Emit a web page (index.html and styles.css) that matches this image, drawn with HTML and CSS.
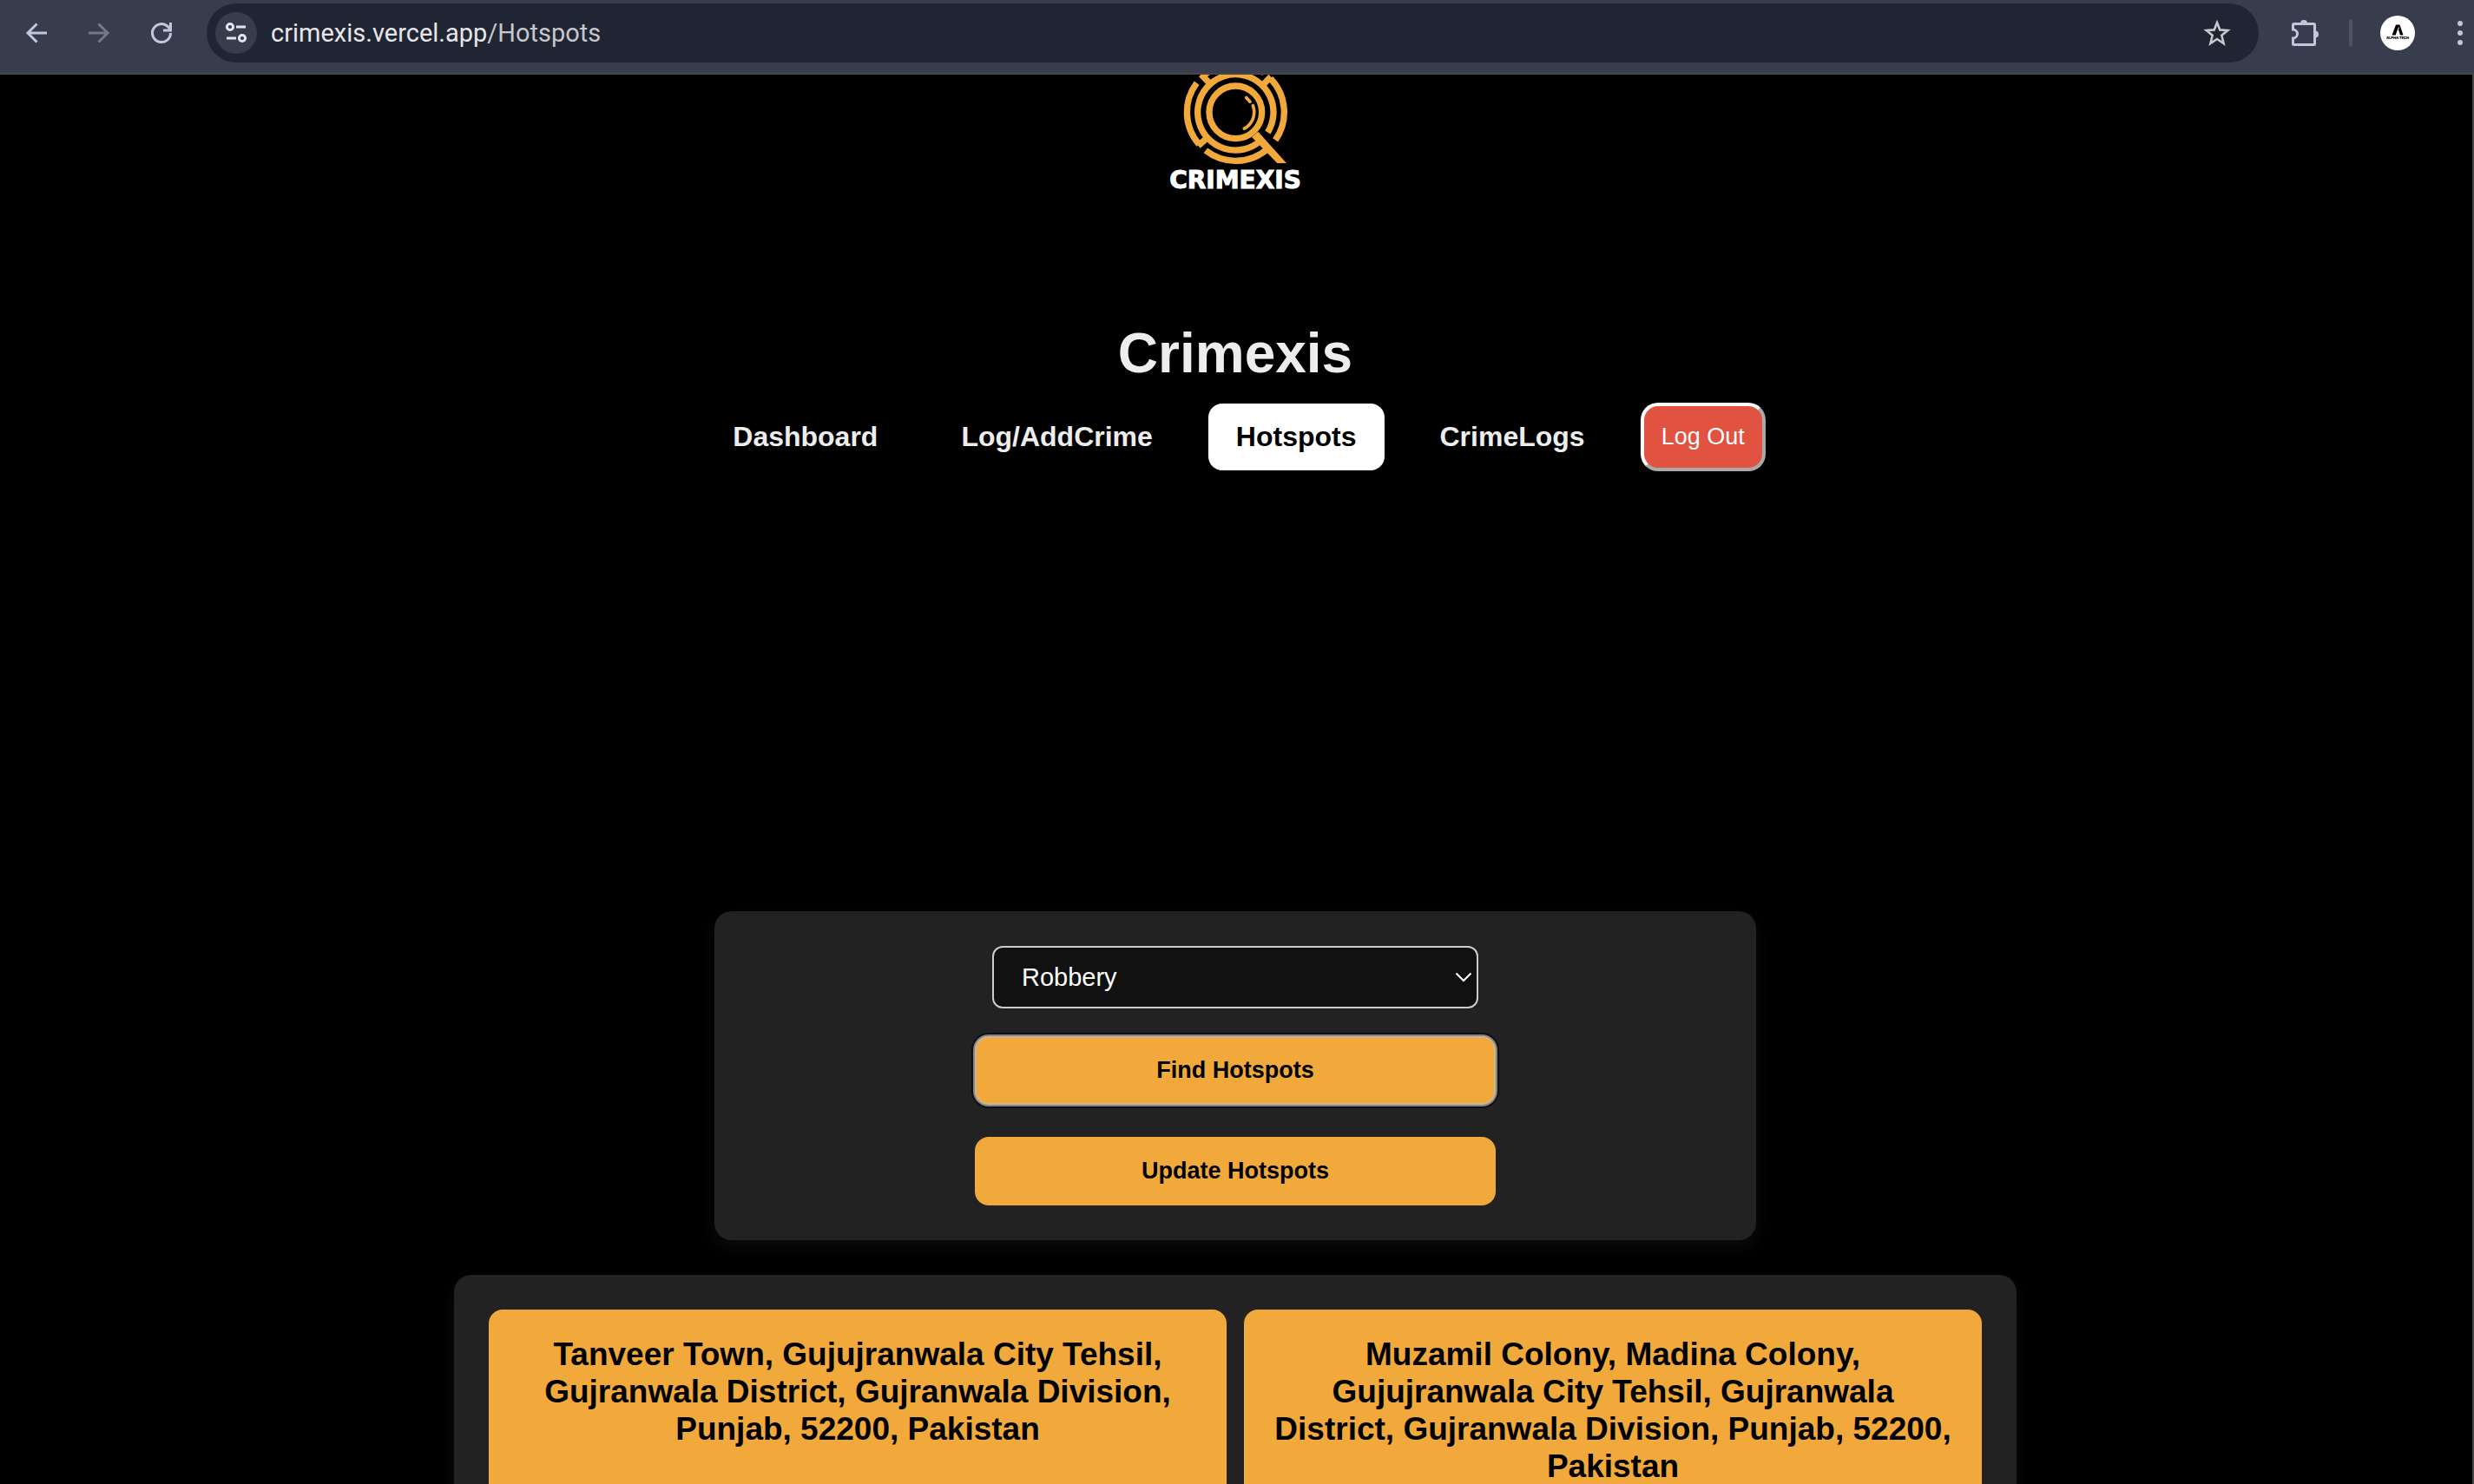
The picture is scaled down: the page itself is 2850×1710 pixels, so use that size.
FILE: index.html
```html
<!DOCTYPE html>
<html lang="en">
<head>
<meta charset="utf-8">
<title>Crimexis</title>
<link rel="stylesheet" href="styles.css">
</head>
<body>
<div class="toolbar">
  <button class="tool" type="button" aria-label="Back">
    <svg width="32" height="32" viewBox="0 0 32 32" fill="none" stroke="#c0c7dc" stroke-width="3"><path d="M28 16H6M16.500 5.500L6 16l10.500 10.500"/></svg>
  </button>
  <button class="tool" type="button" aria-label="Forward">
    <svg width="32" height="32" viewBox="0 0 32 32" fill="none" stroke="#747988" stroke-width="3"><path d="M4 16h22M15.500 5.500L26 16 15.500 26.500"/></svg>
  </button>
  <button class="tool reload" type="button" aria-label="Reload">
    <svg width="32" height="32" viewBox="0 0 32 32" fill="none" stroke="#c0c7dc" stroke-width="3"><path d="M26.500 16A10.500 10.500 0 1 1 23.400 8.600L26 11.200M26.500 4v9H18"/></svg>
  </button>
  <div class="address">
    <button class="site-info" type="button" aria-label="Site information">
      <svg width="28" height="28" viewBox="0 0 28 28" fill="none" stroke="#e3e5ec" stroke-width="3"><circle cx="7" cy="7" r="3.600"/><path d="M14 7h11M3 20h11"/><circle cx="21" cy="20" r="3.600"/></svg>
    </button>
    <a class="url" href="#">crimexis.vercel.app<span class="path">/Hotspots</span></a>
    <button class="tool star" type="button" aria-label="Bookmark">
      <svg width="32" height="32" viewBox="0 0 32 32" fill="none" stroke="#c7c7cc" stroke-width="2.600"><path d="M16 4l3.300 8.400 9 .6-7 5.800 2.300 9.200L16 23l-7.600 5 2.300-9.200-7-5.800 9-.6z"/></svg>
    </button>
  </div>
  <button class="tool puzzle" type="button" aria-label="Extensions">
    <svg width="34" height="34" viewBox="0 0 34 34"><path d="M4.500 6.500h23a1 1 0 0 1 1 1v22a1 1 0 0 1-1 1h-23a1 1 0 0 1-1-1v-6.500a5 5 0 0 0 0-10v-5.500a1 1 0 0 1 1-1z" fill="none" stroke="#c0c7dc" stroke-width="3"/><path d="M12 6a4 4 0 0 1 8 0zM29 14.500a4 4 0 0 1 0 8z" fill="#c0c7dc"/></svg>
  </button>
  <span class="divider"></span>
  <button class="avatar" type="button" aria-label="Profile">
    <svg width="40" height="40" viewBox="0 0 40 40"><circle cx="20" cy="20" r="20" fill="#fff"/><path d="M13.500 22.500L18 10.500h4.500l4 12H23l-2.500-7.500-2.800 7.500z"/><path d="M18.300 22.500l3.200-9" stroke="#fff"/><text class="avatar-text" x="20" y="27" text-anchor="middle">ALPHA TECH</text></svg>
  </button>
  <button class="tool" type="button" aria-label="Menu">
    <svg width="32" height="32" viewBox="0 0 32 32" fill="#c0c7dc"><circle cx="16" cy="5" r="3"/><circle cx="16" cy="16" r="3"/><circle cx="16" cy="27" r="3"/></svg>
  </button>
</div>
<main class="page">
  <header class="brand">
    <svg class="logo" viewBox="0 48 630 312" fill="none" stroke="#f1a93b" stroke-width="22">
      <circle cx="310" cy="178" r="91"/>
      <path d="M421.100 247.400A131 131 0 1 0 394.200 278.400"/>
      <path d="M184 289A168 168 0 0 1 175.800 76.900M212 266l-31 28"/>
      <path d="M197.600 53.100A168 168 0 0 1 408.700 42.100M224 82l-33-35"/>
      <path d="M430.800 61.300A168 168 0 0 1 447.600 274.400M404 84l28-29"/>
      <path d="M206.600 310.400A168 168 0 0 0 422.400 302.800"/>
      <path d="M366 264l22-19 98 109h-32z" fill="#f1a93b" stroke="none"/>
      <path d="M370 155A64 64 0 0 1 340 234.500M347 127.500l13 14" stroke-width="11" stroke-linecap="round"/>
    </svg>
    <p class="brand-name">CRIMEXIS</p>
  </header>
  <h1 class="title">Crimexis</h1>
  <nav class="nav">
    <a class="link" href="#">Dashboard</a>
    <a class="link" href="#">Log/AddCrime</a>
    <a class="link active" href="#">Hotspots</a>
    <a class="link" href="#">CrimeLogs</a>
    <button class="logout" type="button">Log Out</button>
  </nav>
  <form class="panel finder">
    <div class="select-wrap">
      <select class="select" aria-label="Crime type"><option>Robbery</option></select>
      <svg class="chevron" width="20" height="12" viewBox="0 0 20 12" fill="none" stroke="#fff" stroke-width="2"><path d="M1.500 1.500L10 10l8.500-8.500"/></svg>
    </div>
    <button class="action focused" type="button">Find Hotspots</button>
    <button class="action" type="button">Update Hotspots</button>
  </form>
  <section class="panel results">
    <article class="card"><h3 class="place">Tanveer Town, Gujujranwala City Tehsil, Gujranwala District, Gujranwala Division, Punjab, 52200, Pakistan</h3></article>
    <article class="card"><h3 class="place">Muzamil Colony, Madina Colony, Gujujranwala City Tehsil, Gujranwala District, Gujranwala Division, Punjab, 52200, Pakistan</h3></article>
  </section>
</main>
</body>
</html>
```
FILE: styles.css
```css
* { box-sizing: border-box; }
body {
  margin: 0;
  height: 100vh;
  display: flex;
  flex-direction: column;
  overflow: hidden;
  background: #000;
  font-family: "Liberation Sans", Arial, sans-serif;
}
button { font-family: inherit; cursor: pointer; }
.toolbar {
  flex: none;
  display: flex;
  align-items: center;
  height: 86px;
  padding: 4px 0 12px 26px;
  background: #373d4d;
  border-bottom: 2px solid #464646;
}
.toolbar svg { display: block; }
.tool, .site-info, .avatar {
  flex: none;
  padding: 0;
  border: 0;
  background: none;
}
.tool { width: 32px; margin-right: 40px; }
.toolbar > .tool:last-child { margin-right: 0; }
.toolbar > .reload { margin-right: 36px; }
.address {
  flex: 1;
  display: flex;
  align-items: center;
  height: 68px;
  margin-right: 36px;
  padding: 0 32px 0 10px;
  border-radius: 34px;
  background: #202534;
}
.site-info {
  display: grid;
  place-items: center;
  width: 48px;
  height: 48px;
  margin-right: 16px;
  border-radius: 50%;
  background: #373d4d;
}
.url {
  flex: 1;
  color: #e6e6ea;
  font: 29px/34px Roboto, sans-serif;
  text-decoration: none;
}
.path { color: #c7c7cb; }
.address .star { margin-right: 0; }
.puzzle { width: 34px; margin-right: 34px; }
.divider {
  width: 4px;
  height: 32px;
  margin-right: 32px;
  border-radius: 2px;
  background: #4d5364;
}
.avatar { margin-right: 36px; }
.avatar-text { font: 900 4px Inter, sans-serif; }
.page {
  flex: 1;
  min-height: 0;
  display: flex;
  flex-direction: column;
  align-items: center;
  overflow: hidden;
  padding-right: 2px;
  border-right: 2px solid #464646;
}
.page > * { flex: none; }
.brand { display: flex; flex-direction: column; align-items: center; }
.logo { display: block; width: 210px; height: 104px; margin-left: 4px; }
.brand-name {
  margin: 0;
  color: #fff;
  font: 700 28px/36px "DejaVu Sans", sans-serif;
  -webkit-text-stroke: 1px #fff;
}
.title {
  margin: 144px 0 20px;
  color: #ededed;
  font-size: 64px;
  line-height: 74px;
}
.nav { display: flex; align-items: center; gap: 32px; margin-bottom: 507px; }
.link {
  padding: 20px 32px;
  border-radius: 16px;
  color: #ededed;
  font-size: 32px;
  font-weight: 700;
  line-height: 37px;
  text-decoration: none;
}
.link.active { background: #fff; color: #000; }
.logout {
  padding: 20px;
  border: 4px solid;
  border-color: #fff #aaa #aaa #fff;
  border-radius: 20px;
  background: #e15241;
  color: #fff;
  font-size: 27px;
  line-height: 31px;
}
.panel { width: 100%; padding: 40px; border-radius: 20px; background: #222; }
.finder {
  display: flex;
  flex-direction: column;
  align-items: center;
  max-width: 1200px;
  margin-bottom: 40px;
  box-shadow: 0 8px 20px rgba(255, 255, 255, 0.05);
}
.select-wrap { position: relative; width: 50%; margin-bottom: 32px; }
.select {
  display: block;
  width: 100%;
  height: 72px;
  padding: 0 32px;
  appearance: none;
  border: 2px solid #ccc;
  border-radius: 12px;
  background: #111;
  color: #fff;
  font: 29px/34px "Liberation Sans", Arial, sans-serif;
}
.chevron { position: absolute; right: 7px; top: 30px; pointer-events: none; }
.action {
  width: 100%;
  max-width: 600px;
  padding: 24px;
  border: 0;
  border-radius: 16px;
  background: #f1a93b;
  color: #000;
  font-size: 27px;
  font-weight: 700;
  line-height: 31px;
}
.action + .action { margin-top: 37px; }
.focused {
  box-shadow: inset 0 0 0 2px #cdb48c, 0 0 0 2px #86868a, 0 0 0 4px #101010;
}
.results {
  display: grid;
  grid-template-columns: 1fr 1fr;
  gap: 20px;
  max-width: 1800px;
  box-shadow: 0 8px 20px rgba(255, 255, 255, 0.05);
}
.card { min-height: 400px; padding: 30px; border-radius: 16px; background: #f1a93b; }
.place { margin: 0; color: #000; font-size: 37px; line-height: 43px; text-align: center; }
```
